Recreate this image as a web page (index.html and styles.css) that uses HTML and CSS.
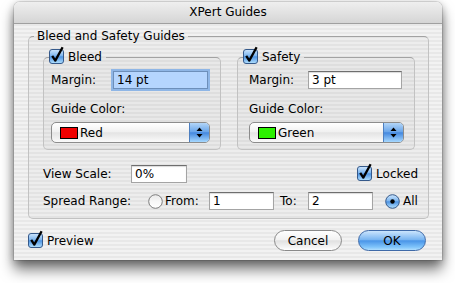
FILE: index.html
```html
<!DOCTYPE html>
<html>
<head>
<meta charset="utf-8">
<link rel="stylesheet" href="styles.css">
</head>
<body>
<svg class="defs" width="0" height="0">
  <defs>
    <linearGradient id="gblue" x1="0" y1="0" x2="0" y2="1">
      <stop offset="0" stop-color="#cfe6fd"/>
      <stop offset="0.45" stop-color="#7db6ef"/>
      <stop offset="0.52" stop-color="#4d93e2"/>
      <stop offset="1" stop-color="#b4e2ff"/>
    </linearGradient>
    <linearGradient id="gwhite" x1="0" y1="0" x2="0" y2="1">
      <stop offset="0" stop-color="#e9e9e9"/>
      <stop offset="0.5" stop-color="#f7f7f7"/>
      <stop offset="1" stop-color="#ffffff"/>
    </linearGradient>
  </defs>
</svg>
<div class="window">
  <div class="titlebar">XPert Guides</div>
  <div class="content">
    <fieldset class="group outer">
      <legend>Bleed and Safety Guides</legend>
      <div class="pair">
        <fieldset class="group inner bleed">
          <legend>
            <svg class="check" width="16" height="18" viewBox="0 0 16 18"><rect x="0.5" y="3.5" width="14" height="14" rx="2.5" fill="url(#gblue)" stroke="#35598a"/><path d="M3.2 9.8 L6.3 14.6 L13.6 1.2" fill="none" stroke="#000" stroke-width="2.3" stroke-linejoin="round"/></svg>
            <span>Bleed</span>
          </legend>
          <div class="body">
            <div class="frow"><span>Margin:</span><span class="field focused">14 pt</span></div>
            <div class="caption">Guide Color:</div>
            <div class="popup"><span class="swatch red"></span><span>Red</span><span class="arrows"><svg width="7" height="11" viewBox="0 0 7 11"><path d="M3.5 0.5 L6.5 4 L0.5 4 Z M0.5 7 L6.5 7 L3.5 10.5 Z" fill="#000"/></svg></span></div>
          </div>
        </fieldset>
        <fieldset class="group inner safety">
          <legend>
            <svg class="check" width="16" height="18" viewBox="0 0 16 18"><rect x="0.5" y="3.5" width="14" height="14" rx="2.5" fill="url(#gblue)" stroke="#35598a"/><path d="M3.2 9.8 L6.3 14.6 L13.6 1.2" fill="none" stroke="#000" stroke-width="2.3" stroke-linejoin="round"/></svg>
            <span>Safety</span>
          </legend>
          <div class="body">
            <div class="frow"><span>Margin:</span><span class="field">3 pt</span></div>
            <div class="caption">Guide Color:</div>
            <div class="popup"><span class="swatch green"></span><span>Green</span><span class="arrows"><svg width="7" height="11" viewBox="0 0 7 11"><path d="M3.5 0.5 L6.5 4 L0.5 4 Z M0.5 7 L6.5 7 L3.5 10.5 Z" fill="#000"/></svg></span></div>
          </div>
        </fieldset>
      </div>
      <div class="row view">
        <span class="lbl-view">View Scale:</span>
        <span class="field w56">0%</span>
        <span class="locked">
          <svg class="check" width="16" height="18" viewBox="0 0 16 18"><rect x="0.5" y="3.5" width="14" height="14" rx="2.5" fill="url(#gblue)" stroke="#35598a"/><path d="M3.2 9.8 L6.3 14.6 L13.6 1.2" fill="none" stroke="#000" stroke-width="2.3" stroke-linejoin="round"/></svg>
          <span>Locked</span>
        </span>
      </div>
      <div class="row spread">
        <span class="lbl-spread">Spread Range:</span>
        <svg class="radio" width="15" height="15" viewBox="0 0 15 15"><circle cx="7.5" cy="7.5" r="6.8" fill="url(#gwhite)" stroke="#7d7d7d"/></svg>
        <span class="t-from">From:</span>
        <span class="field w65">1</span>
        <span class="t-to">To:</span>
        <span class="field w65">2</span>
        <svg class="radio on" width="15" height="15" viewBox="0 0 15 15"><circle cx="7.5" cy="7.5" r="6.8" fill="url(#gblue)" stroke="#35598a"/><circle cx="7.5" cy="7.5" r="2.2" fill="#000"/></svg>
        <span class="t-all">All</span>
      </div>
    </fieldset>
    <div class="footer">
      <span class="preview">
        <svg class="check" width="16" height="18" viewBox="0 0 16 18"><rect x="0.5" y="3.5" width="14" height="14" rx="2.5" fill="url(#gblue)" stroke="#35598a"/><path d="M3.2 9.8 L6.3 14.6 L13.6 1.2" fill="none" stroke="#000" stroke-width="2.3" stroke-linejoin="round"/></svg>
        <span>Preview</span>
      </span>
      <span class="btn cancel">Cancel</span>
      <span class="btn ok">OK</span>
    </div>
  </div>
</div>
</body>
</html>
```
FILE: styles.css
```css
* { box-sizing: border-box; }
html, body { margin: 0; background: #fff; }
body {
  padding: 2px 0 0 14px;
  min-height: 283px;
  font-family: "DejaVu Sans", sans-serif;
  font-size: 12px;
  color: #000;
}
.defs { position: absolute; }
.window {
  width: 428px;
  height: 258px;
  border-radius: 6px 6px 0 0;
  background: repeating-linear-gradient(#f2f2f2 0 2px, #e8e8e8 2px 4px);
  box-shadow: 0 10px 14px rgba(0,0,0,0.5), 0 2px 8px rgba(0,0,0,0.3), 0 0 0 1px rgba(0,0,0,0.1);
  display: flex;
  flex-direction: column;
}
.titlebar {
  flex: none;
  height: 22px;
  line-height: 21px;
  text-align: center;
  border-radius: 6px 6px 0 0;
  border-bottom: 1px solid #a0a0a0;
  background: linear-gradient(#efefef, #d5d5d5);
}
.content {
  padding: 5px 13px 0 14px;
}
.group {
  margin: 0;
  min-width: 0;
  border: 1px solid #c2c2c2;
  border-top-color: #a2a2a2;
  border-radius: 5px;
  background: rgba(0,0,0,0.02);
}
.outer {
  padding: 6px 13px 8px 14px;
}
.outer > legend {
  padding: 0 3px;
  margin-left: -9px;
  line-height: 14px;
}
.pair {
  display: flex;
  gap: 16px;
}
.inner {
  flex: 1;
  padding: 0;
}
.inner > legend {
  display: flex;
  align-items: center;
  height: 16px;
  padding: 0 4px 0 0;
  margin-left: 5px;
}
.check {
  display: block;
  flex: none;
  margin-top: -4px;
  margin-right: 3px;
}
.body {
  padding: 6px 10px 6px 7px;
}
.safety .body { padding-left: 11px; }
.frow {
  display: flex;
  align-items: center;
  justify-content: space-between;
  height: 18px;
  padding-right: 2px;
}
.field {
  display: flex;
  align-items: center;
  height: 18px;
  width: 95px;
  padding-left: 3px;
  background: #fff;
  border: 1px solid #a4a4a4;
  border-top-color: #6e6e6e;
  box-shadow: inset 0 1px 1px rgba(0,0,0,0.15);
}
.safety .field { width: 94px; }
.field.focused {
  background: #b5d5fe;
  box-shadow: 0 0 0 2px #8fb6e6;
  border-color: #6d8fba;
}
.caption {
  margin-top: 13px;
  line-height: 14px;
}
.popup {
  margin-top: 6px;
  height: 21px;
  display: flex;
  align-items: center;
  border: 1px solid #8c8c8c;
  border-radius: 5px;
  background: linear-gradient(#ffffff, #f1f1f1 45%, #e4e4e4 52%, #fafafa);
  overflow: hidden;
  padding-left: 8px;
}
.swatch {
  width: 18px;
  height: 12px;
  border: 1px solid #000;
  margin-right: 2px;
}
.red { background: #f00000; }
.green { background: #2cf000; }
.arrows {
  margin-left: auto;
  align-self: stretch;
  width: 20px;
  display: flex;
  align-items: center;
  justify-content: center;
  border-left: 1px solid #4d7fc0;
  background: linear-gradient(#b3d6f8, #6ca7ea 45%, #4488df 52%, #a6d8ff);
}
.arrows svg { display: block; }
.row {
  display: flex;
  align-items: center;
  height: 18px;
  margin-right: -3px;
}
.view { margin-top: 15px; }
.spread { margin-top: 9px; }
.lbl-view { width: 88px; }
.w56 { width: 56px; }
.w65 { width: 65px; }
.locked {
  margin-left: auto;
  display: flex;
  align-items: center;
}
.lbl-spread { width: 105px; }
.radio { display: block; flex: none; }
.t-from { margin-left: 2px; width: 44px; }
.t-to { margin-left: 6px; width: 28px; }
.radio.on { margin-left: 12px; margin-right: 3px; }
.footer {
  margin-top: 11px;
  display: flex;
  align-items: center;
  height: 21px;
}
.preview {
  display: flex;
  align-items: center;
  margin-right: auto;
}
.btn {
  height: 21px;
  width: 68px;
  border-radius: 11px;
  display: flex;
  align-items: center;
  justify-content: center;
}
.cancel {
  border: 1px solid #8a8a8a;
  background: linear-gradient(#ffffff, #f2f2f2 45%, #e1e1e1 52%, #f4f4f4 85%, #ffffff);
  margin-right: 16px;
}
.ok {
  margin-right: 3px;
  border: 1px solid #3f6aa8;
  background: linear-gradient(#cbe5fd, #7ab6f1 45%, #4a95e8 52%, #80c5fb 85%, #b0defe);
}
```
